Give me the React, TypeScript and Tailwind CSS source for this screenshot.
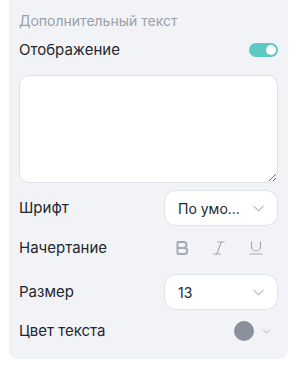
import React, { useState } from 'react';
import { Bold, Italic, Underline, ChevronDown } from 'lucide-react';

const Select: React.FC<{ value: string }> = ({ value }) => (
    <div className="w-[114px] h-[36px] bg-white border border-[#dfe3ea] rounded-[12px] flex items-center justify-between pl-[13px] pr-[9px]">
        <span className="text-[14px] text-[#23272e]">{value}</span>
        <ChevronDown size={19} strokeWidth={1.4} className="text-[#b4b9c2]" />
    </div>
);

const App: React.FC = () => {
    const [enabled, setEnabled] = useState(true);

    return (
        <div className="w-[296px] h-[375px] bg-white" style={{ fontFamily: 'Inter, "Noto Sans", sans-serif' }}>
            <div className="ml-[9px] w-[279px] bg-[#f2f3f7] rounded-b-[8px] px-[10px] pt-[12px] pb-[7px]">
                <div className="h-[16px] flex items-center text-[14px] text-[#9aa0a9]">Дополнительный текст</div>

                <div className="mt-[10px] h-[24px] flex items-center justify-between">
                    <span className="text-[15px] text-[#23272e]">Отображение</span>
                    <button
                        onClick={() => setEnabled(!enabled)}
                        className={`w-[29px] h-[14px] rounded-full flex items-center px-[2px] ${enabled ? 'bg-[#5ccac2] justify-end' : 'bg-[#cfd3da] justify-start'}`}
                    >
                        <span className="w-[10px] h-[10px] rounded-full bg-white" />
                    </button>
                </div>

                <textarea className="mt-[13px] block w-full h-[108px] bg-white border border-[#dde1e8] rounded-[10px] resize-y outline-none p-2 text-[14px]" />

                <div className="mt-[7px] h-[36px] flex items-center justify-between">
                    <span className="text-[15px] text-[#23272e]">Шрифт</span>
                    <Select value="По умо..." />
                </div>

                <div className="h-[44px] flex items-center justify-between">
                    <span className="text-[15px] text-[#23272e]">Начертание</span>
                    <div className="flex items-center gap-[19px] pr-[13px] text-[#a4aab3]">
                        <Bold size={18} strokeWidth={2.6} />
                        <Italic size={18} strokeWidth={1.5} />
                        <Underline size={18} strokeWidth={1.6} />
                    </div>
                </div>

                <div className="mt-[4px] h-[36px] flex items-center justify-between">
                    <span className="text-[15px] text-[#23272e]">Размер</span>
                    <Select value="13" />
                </div>

                <div className="h-[42px] flex items-center justify-between">
                    <span className="text-[15px] text-[#23272e]">Цвет текста</span>
                    <div className="flex items-center gap-[6px] pr-[5px]">
                        <span className="w-[20px] h-[20px] rounded-full bg-[#8a919c]" />
                        <ChevronDown size={13} strokeWidth={1.8} className="text-[#aab0b9]" />
                    </div>
                </div>
            </div>
        </div>
    );
};

export default App;
